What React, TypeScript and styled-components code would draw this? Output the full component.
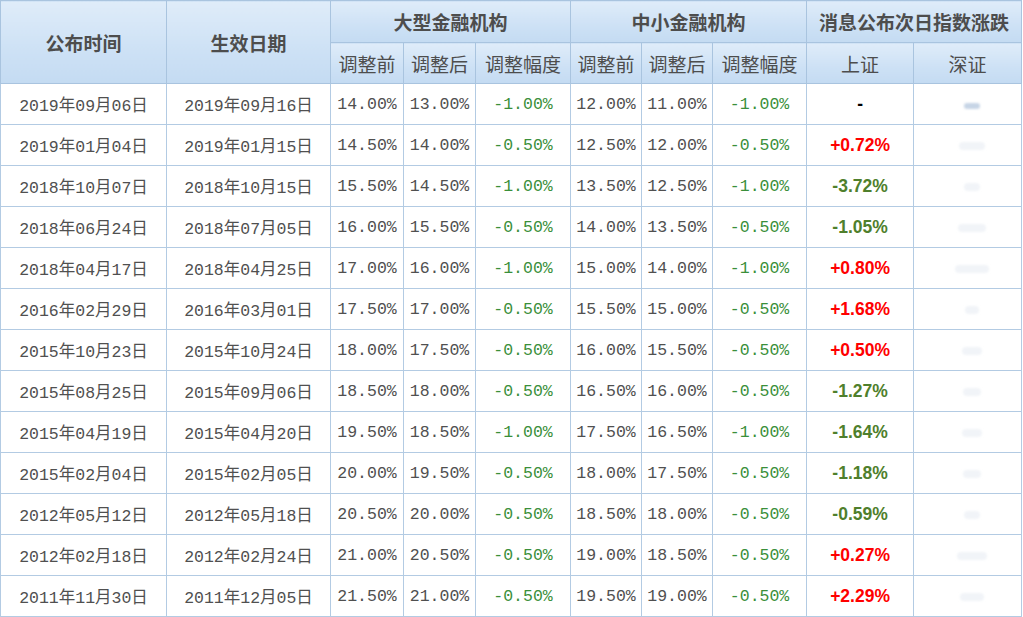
import React from 'react';
import styled, { createGlobalStyle } from 'styled-components';

const GlobalStyle = createGlobalStyle`
  html, body {
    margin: 0;
    padding: 0;
    background: #ffffff;
  }
  body {
    font-family: "Liberation Sans", "Noto Sans CJK SC", sans-serif;
  }
`;

const Table = styled.table`
  width: 1021px;
  table-layout: fixed;
  border-collapse: collapse;
  border-left: 1px solid #b3cbe3;
`;

const HeadCell = styled.th<{ $sub?: boolean }>`
  height: ${(p) => (p.$sub ? '41px' : '42px')};
  box-sizing: border-box;
  padding: 0;
  border: 1px solid #a9c4df;
  background: linear-gradient(to bottom, #dfecf9 0%, #cde1f5 60%, #c4dbf2 100%);
  color: #4d4d4d;
  font-family: "Noto Sans CJK SC", sans-serif;
  font-size: 19px;
  font-weight: ${(p) => (p.$sub ? 400 : 700)};
  text-align: center;
  vertical-align: middle;
  line-height: 19px;
`;

const Row = styled.tr`
  height: 41px;
`;

const Cell = styled.td<{ $tone?: 'plain' | 'green' }>`
  padding: 0;
  border: 1px solid #b3cbe3;
  background: #ffffff;
  text-align: center;
  vertical-align: middle;
  white-space: nowrap;
  font-family: "Liberation Mono", "Noto Sans CJK SC", monospace;
  font-size: 16.5px;
  color: ${(p) => (p.$tone === 'green' ? '#3a8f3a' : '#505050')};
`;

const IndexCell = styled.td<{ $up?: boolean; $none?: boolean }>`
  padding: 0;
  border: 1px solid #b3cbe3;
  background: #ffffff;
  text-align: center;
  vertical-align: middle;
  font-family: "Liberation Sans", sans-serif;
  font-weight: 700;
  font-size: 17.5px;
  color: ${(p) => (p.$none ? '#000000' : p.$up ? '#ff0000' : '#4f7f2c')};
`;

const BlurCell = styled.td`
  padding: 0;
  border: 1px solid #b3cbe3;
  background: #ffffff;
  text-align: center;
  vertical-align: middle;
`;

const Smudge = styled.span<{ $w: number; $strong?: boolean }>`
  display: inline-block;
  width: ${(p) => p.$w}px;
  height: ${(p) => (p.$strong ? 6 : 8)}px;
  margin-left: 8px;
  border-radius: 4px;
  background: ${(p) => (p.$strong ? '#c7d5e6' : '#f1f4f8')};
  filter: blur(1.2px);
`;

type Rec = {
  pub: string;
  eff: string;
  bigBefore: string;
  bigAfter: string;
  bigDelta: string;
  smBefore: string;
  smAfter: string;
  smDelta: string;
  sh: string;
  smudge: number;
};

const rows: Rec[] = [
  { pub: '2019年09月06日', eff: '2019年09月16日', bigBefore: '14.00%', bigAfter: '13.00%', bigDelta: '-1.00%', smBefore: '12.00%', smAfter: '11.00%', smDelta: '-1.00%', sh: '-', smudge: 16 },
  { pub: '2019年01月04日', eff: '2019年01月15日', bigBefore: '14.50%', bigAfter: '14.00%', bigDelta: '-0.50%', smBefore: '12.50%', smAfter: '12.00%', smDelta: '-0.50%', sh: '+0.72%', smudge: 26 },
  { pub: '2018年10月07日', eff: '2018年10月15日', bigBefore: '15.50%', bigAfter: '14.50%', bigDelta: '-1.00%', smBefore: '13.50%', smAfter: '12.50%', smDelta: '-1.00%', sh: '-3.72%', smudge: 16 },
  { pub: '2018年06月24日', eff: '2018年07月05日', bigBefore: '16.00%', bigAfter: '15.50%', bigDelta: '-0.50%', smBefore: '14.00%', smAfter: '13.50%', smDelta: '-0.50%', sh: '-1.05%', smudge: 28 },
  { pub: '2018年04月17日', eff: '2018年04月25日', bigBefore: '17.00%', bigAfter: '16.00%', bigDelta: '-1.00%', smBefore: '15.00%', smAfter: '14.00%', smDelta: '-1.00%', sh: '+0.80%', smudge: 34 },
  { pub: '2016年02月29日', eff: '2016年03月01日', bigBefore: '17.50%', bigAfter: '17.00%', bigDelta: '-0.50%', smBefore: '15.50%', smAfter: '15.00%', smDelta: '-0.50%', sh: '+1.68%', smudge: 14 },
  { pub: '2015年10月23日', eff: '2015年10月24日', bigBefore: '18.00%', bigAfter: '17.50%', bigDelta: '-0.50%', smBefore: '16.00%', smAfter: '15.50%', smDelta: '-0.50%', sh: '+0.50%', smudge: 20 },
  { pub: '2015年08月25日', eff: '2015年09月06日', bigBefore: '18.50%', bigAfter: '18.00%', bigDelta: '-0.50%', smBefore: '16.50%', smAfter: '16.00%', smDelta: '-0.50%', sh: '-1.27%', smudge: 18 },
  { pub: '2015年04月19日', eff: '2015年04月20日', bigBefore: '19.50%', bigAfter: '18.50%', bigDelta: '-1.00%', smBefore: '17.50%', smAfter: '16.50%', smDelta: '-1.00%', sh: '-1.64%', smudge: 20 },
  { pub: '2015年02月04日', eff: '2015年02月05日', bigBefore: '20.00%', bigAfter: '19.50%', bigDelta: '-0.50%', smBefore: '18.00%', smAfter: '17.50%', smDelta: '-0.50%', sh: '-1.18%', smudge: 18 },
  { pub: '2012年05月12日', eff: '2012年05月18日', bigBefore: '20.50%', bigAfter: '20.00%', bigDelta: '-0.50%', smBefore: '18.50%', smAfter: '18.00%', smDelta: '-0.50%', sh: '-0.59%', smudge: 16 },
  { pub: '2012年02月18日', eff: '2012年02月24日', bigBefore: '21.00%', bigAfter: '20.50%', bigDelta: '-0.50%', smBefore: '19.00%', smAfter: '18.50%', smDelta: '-0.50%', sh: '+0.27%', smudge: 30 },
  { pub: '2011年11月30日', eff: '2011年12月05日', bigBefore: '21.50%', bigAfter: '21.00%', bigDelta: '-0.50%', smBefore: '19.50%', smAfter: '19.00%', smDelta: '-0.50%', sh: '+2.29%', smudge: 24 },
];

const colWidths = [166, 164, 73, 72, 95, 71, 71, 94, 107, 108];

const App: React.FC = () => {
  return (
    <>
      <GlobalStyle />
      <Table>
        <colgroup>
          {colWidths.map((w, i) => (
            <col key={i} style={{ width: w }} />
          ))}
        </colgroup>
        <thead>
          <tr>
            <HeadCell rowSpan={2}>公布时间</HeadCell>
            <HeadCell rowSpan={2}>生效日期</HeadCell>
            <HeadCell colSpan={3}>大型金融机构</HeadCell>
            <HeadCell colSpan={3}>中小金融机构</HeadCell>
            <HeadCell colSpan={2}>消息公布次日指数涨跌</HeadCell>
          </tr>
          <tr>
            <HeadCell $sub>调整前</HeadCell>
            <HeadCell $sub>调整后</HeadCell>
            <HeadCell $sub>调整幅度</HeadCell>
            <HeadCell $sub>调整前</HeadCell>
            <HeadCell $sub>调整后</HeadCell>
            <HeadCell $sub>调整幅度</HeadCell>
            <HeadCell $sub>上证</HeadCell>
            <HeadCell $sub>深证</HeadCell>
          </tr>
        </thead>
        <tbody>
          {rows.map((r, i) => (
            <Row key={r.pub}>
              <Cell>{r.pub}</Cell>
              <Cell>{r.eff}</Cell>
              <Cell>{r.bigBefore}</Cell>
              <Cell>{r.bigAfter}</Cell>
              <Cell $tone="green">{r.bigDelta}</Cell>
              <Cell>{r.smBefore}</Cell>
              <Cell>{r.smAfter}</Cell>
              <Cell $tone="green">{r.smDelta}</Cell>
              <IndexCell $none={r.sh === '-'} $up={r.sh.startsWith('+')}>
                {r.sh}
              </IndexCell>
              <BlurCell>
                <Smudge $w={r.smudge} $strong={i === 0} />
              </BlurCell>
            </Row>
          ))}
        </tbody>
      </Table>
    </>
  );
};

export default App;
